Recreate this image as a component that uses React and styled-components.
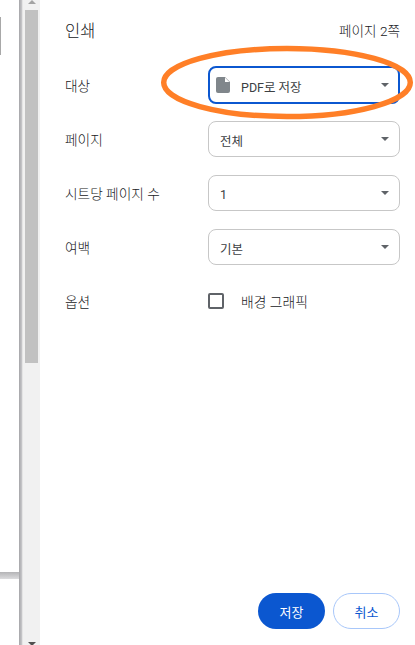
import React from 'react';
import styled, { createGlobalStyle } from 'styled-components';

const Global = createGlobalStyle`
  html, body { margin: 0; padding: 0; background: #fff; }
  body { font-family: "Liberation Sans", "Noto Sans CJK KR", sans-serif; }
`;
const Page = styled.div`
  position: relative; width: 415px; height: 645px; display: flex; overflow: hidden; background: #fff;
  font-family: Roboto, "Noto Sans CJK KR", sans-serif; color: #202124;
`;
const Preview = styled.div`
  width: 19px; flex: none; display: flex; flex-direction: column; background: #fff;
`;
const Sheet = styled.div`
  height: 572px; flex: none; padding-top: 17px; box-sizing: border-box;
`;
const Tab = styled.div`
  width: 1px; height: 38px; background: #a8a8a8;
`;
const Gap = styled.div`
  height: 7px; flex: none; background: linear-gradient(#b4b4b6, #dcdcde);
`;
const Divider = styled.div`
  width: 3px; flex: none; background: linear-gradient(90deg, #a5a5a8, #c9c9cc);
`;
const Track = styled.div`
  width: 18px; flex: none; background: #f1f1f1; display: flex; flex-direction: column; align-items: center; justify-content: space-between;
  border-left: 1px solid #e4e4e4; box-sizing: border-box;
`;
const Thumb = styled.div`
  width: 13px; height: 353px; margin-top: 6px; background: #c1c1c1;
`;
const TrackTop = styled.div`
  display: flex; flex-direction: column; align-items: center;
`;
const Arrow = styled.div`
  width: 0; height: 0; border-left: 4px solid transparent; border-right: 4px solid transparent;
  ${p => p.$up ? 'border-bottom: 4px solid #a3a3a3;' : 'border-top: 4px solid #505050; margin-bottom: -1px;'}
`;
const Panel = styled.div`
  flex: 1; display: flex; flex-direction: column; padding: 0 15px 16px 25px; box-sizing: border-box; min-width: 0;
`;
const Header = styled.div`
  height: 58px; display: flex; align-items: center; justify-content: space-between; flex: none; padding-top: 1px; box-sizing: border-box;
`;
const Title = styled.div`
  font-size: 16.5px; font-weight: 300; color: #202124;
`;
const Count = styled.div`
  font-size: 13.6px; font-weight: 300; color: #202124;
`;
const Rows = styled.div`
  display: flex; flex-direction: column; gap: 18px; flex: 1; padding-top: 9px;
`;
const Row = styled.div`
  display: flex; align-items: center; height: 36px;
`;
const Label = styled.div`
  width: 143px; flex: none; font-size: 13.7px; font-weight: 300; color: #202124;
`;
const Select = styled.div`
  width: 192px; height: ${p => p.$focus ? '38px' : '36px'}; box-sizing: border-box; border-radius: 8px; display: flex; align-items: center; gap: 11px;
  padding: 0 ${p => p.$focus ? '9px' : '10px'} 0 ${p => p.$focus ? '6px' : '11px'};
  border: ${p => p.$focus ? '2px solid #0b57d0' : '1px solid #c7c7c7'};
  font-size: 12.5px; color: #3c4043; background: #fff;
`;
const SelectText = styled.span`
  flex: 1; padding-top: 2px; white-space: nowrap;
`;
const Caret = styled.div`
  width: 0; height: 0; border-left: 4px solid transparent; border-right: 4px solid transparent; border-top: 4px solid #5f6368;
`;
const Check = styled.div`
  width: 12px; height: 12px; border: 2px solid #5f6368; border-radius: 2px; flex: none; margin-right: 17px;
`;
const CheckText = styled.div`
  font-size: 13.8px; font-weight: 300; color: #202124;
`;
const Footer = styled.div`
  display: flex; justify-content: flex-end; gap: 8px; flex: none;
`;
const Primary = styled.button`
  width: 67px; height: 36px; border: 0; border-radius: 18px; background: #0b57d0; color: #fff; font: inherit; font-size: 13px; padding: 0;
`;
const Secondary = styled.button`
  width: 67px; height: 36px; border: 1px solid #a8c7fa; border-radius: 18px; background: #fff; color: #0b57d0; font: inherit; font-size: 13px; padding: 0;
`;
const Ring = styled.svg`
  position: absolute; left: 155px; top: 40px; pointer-events: none;
`;
const DocSvg = styled.svg`
  flex: none;
`;

const DocIcon = () => (
  <DocSvg width="14" height="16" viewBox="0 0 14 16">
    <path d="M2 0H9L14 5V14A2 2 0 0 1 12 16H2A2 2 0 0 1 0 14V2A2 2 0 0 1 2 0Z" fill="#80868b" />
    <path d="M9 0.6V5H13.4Z" fill="#fff" />
  </DocSvg>
);

const SelectBox = ({ text, focus }) => (
  <Select $focus={focus}>
    {focus && <DocIcon />}
    <SelectText>{text}</SelectText>
    <Caret />
  </Select>
);

export default function App() {
  return (
    <Page>
      <Global />
      <Preview>
        <Sheet><Tab /></Sheet>
        <Gap />
      </Preview>
      <Divider />
      <Track>
        <TrackTop><Arrow $up /><Thumb /></TrackTop>
        <Arrow />
      </Track>
      <Panel>
        <Header>
          <Title>인쇄</Title>
          <Count>페이지 2쪽</Count>
        </Header>
        <Rows>
          <Row><Label>대상</Label><SelectBox focus text="PDF로 저장" /></Row>
          <Row><Label>페이지</Label><SelectBox text="전체" /></Row>
          <Row><Label>시트당 페이지 수</Label><SelectBox text="1" /></Row>
          <Row><Label>여백</Label><SelectBox text="기본" /></Row>
          <Row><Label>옵션</Label><Check /><CheckText>배경 그래픽</CheckText></Row>
        </Rows>
        <Footer>
          <Primary>저장</Primary>
          <Secondary>취소</Secondary>
        </Footer>
      </Panel>
      <Ring width="260" height="84" viewBox="0 0 260 84">
        <ellipse cx="132" cy="42.5" rx="123.3" ry="34" fill="none" stroke="#ff7f27" strokeWidth="5.5" />
      </Ring>
    </Page>
  );
}
